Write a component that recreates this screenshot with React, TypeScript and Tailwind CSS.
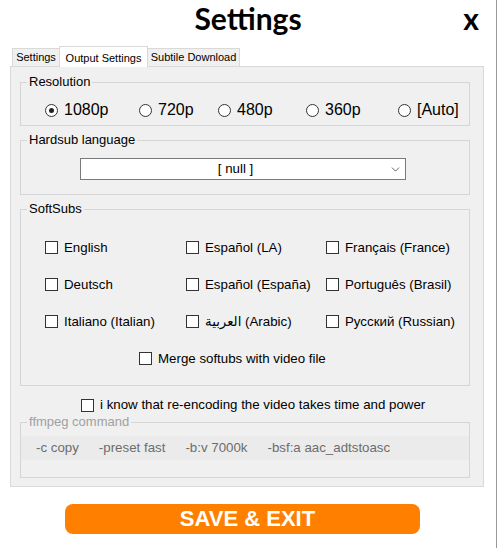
import { ChevronDown } from "lucide-react";

const sans = "font-['Liberation_Sans','DejaVu_Sans',sans-serif]";

function Box() {
  return <span className="w-[13px] h-[13px] border border-[#333] bg-white shrink-0" />;
}

function Check({ label }: { label: string }) {
  return (
    <div className="flex items-center gap-[6px] text-[13.3px] text-black">
      <Box />
      <span>{label}</span>
    </div>
  );
}

function Radio({ label, checked }: { label: string; checked?: boolean }) {
  return (
    <div className="flex items-center gap-[6px] text-[16px] text-black">
      <span className="w-[13px] h-[13px] rounded-full border border-[#333] bg-white flex items-center justify-center shrink-0">
        {checked && <span className="w-[5px] h-[5px] rounded-full bg-[#222]" />}
      </span>
      <span>{label}</span>
    </div>
  );
}

const softsubs = [
  "English",
  "Español (LA)",
  "Français (France)",
  "Deutsch",
  "Español (España)",
  "Português (Brasil)",
  "Italiano (Italian)",
  "العربية (Arabic)",
  "Русский (Russian)",
];

export default function App() {
  return (
    <div className={`w-[497px] h-[548px] bg-white border-r border-[#999] ${sans}`}>
      {/* header */}
      <div className="grid grid-cols-[1fr_auto_1fr] h-[46px] font-['Lato',sans-serif] font-bold text-black">
        <div />
        <h1 className="text-[30px] leading-[36px]">Settings</h1>
        <div className="flex justify-end pr-[17px] text-[30px] leading-[36px]">x</div>
      </div>

      {/* tabs */}
      <div className="flex items-end h-[20px] pl-[12px] text-[11px] text-black">
        <div className="w-[48px] h-[18px] border border-b-0 border-[#d9d9d9] bg-[#f0f0f0] flex items-center justify-center">
          Settings
        </div>
        <div className="relative z-10 w-[89px] h-[21px] -mb-px -ml-px border border-b-0 border-[#d9d9d9] bg-white flex items-start pt-[3px] justify-center">
          Output Settings
        </div>
        <div className="w-[93px] h-[18px] -ml-px border border-b-0 border-[#d9d9d9] bg-[#f0f0f0] flex items-center justify-center">
          Subtile Download
        </div>
      </div>

      {/* panel */}
      <div className="ml-[10px] w-[474px] h-[421px] border border-[#d9d9d9] bg-[#f0f0f0] pt-[7px] pl-[9px]">
        <fieldset className="w-[450px] h-[52px] border border-[#d5d5d5]">
          <legend className="ml-[6px] px-[2px] text-[13px] leading-[16px]">Resolution</legend>
          <div className="grid grid-cols-[94px_79px_88px_92px_1fr] items-center h-[18px] mt-[8px] pl-[24px]">
            <Radio label="1080p" checked />
            <Radio label="720p" />
            <Radio label="480p" />
            <Radio label="360p" />
            <Radio label="[Auto]" />
          </div>
        </fieldset>

        <fieldset className="mt-[6px] w-[450px] h-[63px] border border-[#d5d5d5]">
          <legend className="ml-[6px] px-[2px] text-[13px] leading-[16px]">Hardsub language</legend>
          <div className="mt-[10px] ml-[59px] w-[326px] h-[22px] border border-[#7a7a7a] bg-white flex items-center text-[13.3px]">
            <span className="flex-1 text-center pl-[1px]">[ null ]</span>
            <ChevronDown size={13} strokeWidth={1.4} className="text-[#333] mr-[3px]" />
          </div>
        </fieldset>

        <fieldset className="mt-[6px] w-[450px] h-[185px] border border-[#d5d5d5]">
          <legend className="ml-[6px] px-[2px] text-[13px] leading-[16px]">SoftSubs</legend>
          <div className="grid grid-cols-[141px_140px_1fr] auto-rows-[37px] items-center pl-[24px] pt-[12px]">
            {softsubs.map((s) => (
              <Check key={s} label={s} />
            ))}
          </div>
          <div className="h-[37px] flex items-center pl-[118px]">
            <Check label="Merge softubs with video file" />
          </div>
        </fieldset>

        <div className="mt-[10px] h-[18px] flex items-center pl-[61px]">
          <Check label="i know that re-encoding the video takes time and power" />
        </div>

        <fieldset className="w-[450px] h-[64px] border border-[#d5d5d5]">
          <legend className="ml-[6px] px-[2px] text-[13px] leading-[16px] text-[#a0a0a0]">ffmpeg command</legend>
          <div className="mt-[6px] h-[24px] bg-[#ebebeb] flex items-center gap-[20px] pl-[15px] text-[13.3px] text-[#6d6d6d]">
            <span>-c copy</span>
            <span>-preset fast</span>
            <span>-b:v 7000k</span>
            <span>-bsf:a aac_adtstoasc</span>
          </div>
        </fieldset>
      </div>

      <button className="mt-[17px] ml-[65px] w-[355px] h-[30px] rounded-[8px] bg-[#ff8000] text-white font-bold text-[22px] leading-none flex items-center justify-center pl-[10px]">
        SAVE &amp; EXIT
      </button>
    </div>
  );
}
